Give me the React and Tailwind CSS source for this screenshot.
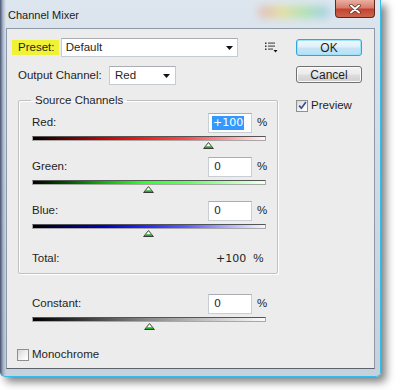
import React from "react";

function Thumb() {
  return (
    <svg width="11" height="7" viewBox="0 0 11 7" className="block">
      <path d="M5.5 0.6 L10.4 6.5 L0.6 6.5 Z" fill="#ffffff" stroke="#3a3a3a" strokeWidth="1" />
      <path d="M2.6 4.3 L8.4 4.3 L9.5 6 L1.5 6 Z" fill="#22b022" />
    </svg>
  );
}

function Check({ checked }) {
  return (
    <div className="w-[12px] h-[12px] border border-[#8e8f8f] bg-[linear-gradient(135deg,#d6d6d6_0%,#f4f4f4_60%,#ffffff_100%)] flex items-center justify-center shrink-0">
      {checked && (
        <svg width="9" height="9" viewBox="0 0 9 9" className="block">
          <path d="M1.2 4.6 L3.4 7.2 L7.9 1" fill="none" stroke="#3b4f8e" strokeWidth="1.7" />
        </svg>
      )}
    </div>
  );
}

function Arrow() {
  return (
    <svg width="7" height="4" viewBox="0 0 7 4" className="block">
      <path d="M0 0 L7 0 L3.5 4 Z" fill="#111" />
    </svg>
  );
}

function NumBox({ value, selected }) {
  return (
    <div className="w-[44px] h-[20px] bg-white border border-[#c9ced4] border-t-[#abadb3] flex items-center pl-[3px] font-['DejaVu_Sans',sans-serif] text-[11px] text-[#2a2a3a]">
      {selected ? (
        <span className="bg-[#3399ff] text-white px-[1px] leading-[14px]">{value}</span>
      ) : (
        <span className="pl-[2px]">{value}</span>
      )}
    </div>
  );
}

function Channel({ label, value, selected, grad, thumbPad, first }) {
  return (
    <div className={first ? "mt-[6px]" : "mt-[8px]"}>
      <div className="h-[20px] flex items-center">
        <div className="pl-[13px] w-[189px]">{label}</div>
        <NumBox value={value} selected={selected} />
        <div className="ml-[5px]">%</div>
      </div>
      <div className={"mt-[3px] ml-[13px] w-[234px] h-[5px] border border-[#a8a8a8] border-t-[#555] " + grad} />
      <div className={"mt-[1px] h-[7px] " + thumbPad}>
        <Thumb />
      </div>
    </div>
  );
}

export default function App() {
  return (
    <div className="w-[400px] h-[390px] bg-white overflow-hidden font-['Liberation_Sans',Arial,sans-serif] text-[11.5px] text-[#1f1f1f]">
      <div className="w-[381px] h-[377px] flex flex-col rounded-b-[5px] border-r border-b border-[#2fbfea] shadow-[5px_5px_9px_rgba(0,0,0,0.5)] bg-[linear-gradient(to_right,rgba(25,35,70,0.75)_0px,rgba(110,130,165,0.45)_3px,rgba(0,0,0,0)_6px),linear-gradient(180deg,#dde6ee_0%,#cfdae5_50%,#c6d1dd_100%)]">
        {/* title bar */}
        <div className="h-[28px] flex items-start shrink-0">
          <div className="ml-[8px] mt-[9px] text-[11px] leading-[13px] text-[#1a1a1a]">Channel Mixer</div>
          <div className="flex-1" />
          <div className="mt-[6px] w-[72px] h-[12px] rounded-full blur-[4px] opacity-70 bg-[linear-gradient(to_right,#e7a3a3,#e8dc7a,#98e098,#86c4ea)]" />
          <div className="ml-[5px] mr-[5px] w-[40px] h-[18px] rounded-b-[4px] border border-t-0 border-[#5e271d] bg-[linear-gradient(180deg,#eab0a2_0%,#d77e6b_45%,#c4432f_55%,#cb6650_100%)] flex items-center justify-center">
            <svg width="12" height="10" viewBox="0 0 12 10" className="block">
              <path d="M2 1.5 L10 8.5 M10 1.5 L2 8.5" stroke="#5a2a22" strokeWidth="3.4" strokeLinecap="round" />
              <path d="M2 1.5 L10 8.5 M10 1.5 L2 8.5" stroke="#ffffff" strokeWidth="2" strokeLinecap="round" />
            </svg>
          </div>
        </div>

        {/* client */}
        <div className="ml-[6px] w-[369px] h-[341px] border border-[#8d99a6] border-b-[#5b646d] bg-[#ececec] flex">
          {/* left column */}
          <div className="pl-[5px] w-[271px] shrink-0 flex flex-col">
            <div className="mt-[9px] h-[19px] flex items-center">
              <div className="w-[47px] h-[15px] bg-[#f0f235] flex items-center pl-[6px]">Preset:</div>
              <div className="ml-[2px] w-[178px] h-[19px] bg-white border border-[#c5cbd2] border-t-[#abadb3] flex items-center pl-[4px] pr-[4px]">
                <span className="flex-1">Default</span>
                <Arrow />
              </div>
              <div className="ml-[27px]">
                <svg width="13" height="11" viewBox="0 0 13 11" className="block">
                  <rect x="0" y="0.5" width="1.5" height="1.5" fill="#333" />
                  <rect x="3" y="0.5" width="7" height="1.2" fill="#555" />
                  <rect x="0" y="3.5" width="1.5" height="1.5" fill="#333" />
                  <rect x="3" y="3.5" width="7" height="1.2" fill="#555" />
                  <rect x="0" y="6.5" width="1.5" height="1.5" fill="#333" />
                  <rect x="3" y="6.5" width="5" height="1.2" fill="#555" />
                  <path d="M8.5 8 L12.5 8 L10.5 10.5 Z" fill="#111" />
                </svg>
              </div>
            </div>

            <div className="mt-[9px] h-[19px] flex items-center pl-[6px]">
              <div className="w-[91px]">Output Channel:</div>
              <div className="w-[67px] h-[19px] bg-white border border-[#c5cbd2] border-t-[#abadb3] flex items-center pl-[5px] pr-[5px]">
                <span className="flex-1">Red</span>
                <Arrow />
              </div>
            </div>

            <fieldset className="mt-[8px] ml-[6px] w-[260px] border border-[#c0c0c0] rounded-[2px] shadow-[inset_1px_1px_0_#fff,1px_1px_0_#fff] pb-[6px]">
              <legend className="ml-[12px] px-[4px] leading-[14px]">Source Channels</legend>
              <Channel
                first
                label="Red:"
                value="+100"
                selected
                thumbPad="pl-[184px]"
                grad="bg-[linear-gradient(to_right,#000_0%,#600000_14%,#c80000_30%,#ff1818_48%,#ff4848_66%,#ff9c9c_84%,#fff6f6_100%)]"
              />
              <Channel
                label="Green:"
                value="0"
                thumbPad="pl-[124px]"
                grad="bg-[linear-gradient(to_right,#000_0%,#005000_14%,#10b010_30%,#30ff30_48%,#5cff5c_66%,#b0ffb0_84%,#f4fff4_100%)]"
              />
              <Channel
                label="Blue:"
                value="0"
                thumbPad="pl-[124px]"
                grad="bg-[linear-gradient(to_right,#000_0%,#000060_14%,#0000c0_30%,#2424ff_48%,#5c5cff_66%,#b0b0ff_84%,#f4f4ff_100%)]"
              />
              <div className="mt-[14px] h-[16px] flex items-center">
                <div className="pl-[13px] w-[197px]">Total:</div>
                <div className="font-['DejaVu_Sans',sans-serif] text-[11px]">+100</div>
                <div className="ml-[7px]">%</div>
              </div>
            </fieldset>

            <div className="mt-[20px] h-[20px] flex items-center">
              <div className="pl-[20px] w-[196px]">Constant:</div>
              <NumBox value="0" />
              <div className="ml-[5px]">%</div>
            </div>
            <div className="mt-[3px] ml-[20px] w-[234px] h-[5px] border border-[#a8a8a8] border-t-[#555] bg-[linear-gradient(to_right,#000_0%,#3a3a3a_22%,#8a8a8a_50%,#c4c4c4_75%,#fafafa_100%)]" />
            <div className="mt-[1px] h-[7px] pl-[132px]">
              <Thumb />
            </div>

            <div className="mt-[18px] h-[13px] flex items-center pl-[5px]">
              <Check />
              <div className="ml-[3px]">Monochrome</div>
            </div>
          </div>

          {/* right column */}
          <div className="ml-[18px] flex flex-col">
            <div className="mt-[10px] w-[66px] h-[17px] rounded-[3px] border border-[#2fa6de] shadow-[inset_0_0_0_1px_#9fe3fb] bg-[linear-gradient(180deg,#f0f8fd_0%,#dff0fa_48%,#c6e5f6_52%,#b8dff4_100%)] flex items-center justify-center text-[12px]">
              OK
            </div>
            <div className="mt-[10px] w-[66px] h-[17px] rounded-[3px] border border-[#707070] shadow-[inset_0_0_0_1px_#fbfbfb] bg-[linear-gradient(180deg,#f3f3f3_0%,#ebebeb_48%,#dddddd_52%,#cfcfcf_100%)] flex items-center justify-center text-[12px]">
              Cancel
            </div>
            <div className="mt-[14px] flex items-center">
              <Check checked />
              <div className="ml-[3px]">Preview</div>
            </div>
          </div>
        </div>
      </div>
    </div>
  );
}
